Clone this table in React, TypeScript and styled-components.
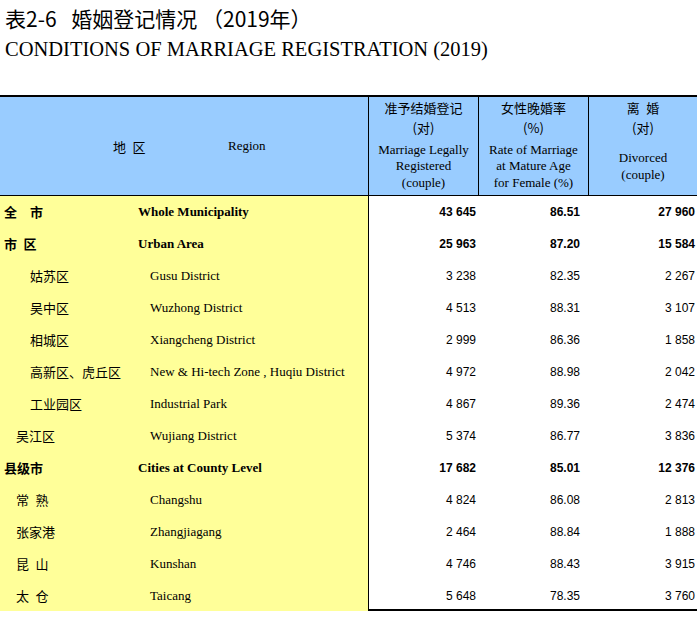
import React from 'react';
import styled, { createGlobalStyle, css } from 'styled-components';

const Global = createGlobalStyle`
  html, body { margin: 0; padding: 0; background: #fff; }
  body { font-family: "Liberation Serif", "Noto Sans CJK SC", serif; color: #000; }
  * { box-sizing: border-box; }
`;

const Page = styled.div`
  width: 699px;
  padding-top: 4px;
`;

const TitleCn = styled.h1`
  margin: 0 0 0 5px;
  font-family: "Noto Sans CJK SC", sans-serif;
  font-weight: 400;
  font-size: 21px;
  line-height: 28px;
  white-space: pre;
`;

const TitleEn = styled.h2`
  margin: 5px 0 0 5px;
  font-family: "Liberation Serif", serif;
  font-weight: 400;
  font-size: 20.5px;
  line-height: 24px;
`;

const grid = css`
  display: grid;
  grid-template-columns: 368px 110px 110px 109px;
`;

const Table = styled.div`
  margin-top: 34px;
  width: 697px;
  border-top: 2px solid #000;
  border-bottom: 2px solid #000;
`;

const HeadRow = styled.div`
  ${grid}
  height: 99px;
  background: #99ccff;
  border-bottom: 1px solid #000;
`;

const RegionHead = styled.div`
  display: flex;
  align-items: center;
  padding-left: 113px;
  font-size: 13px;
`;

const RegionHeadCn = styled.span`
  width: 115px;
  font-family: "Noto Sans CJK SC", sans-serif;
`;

const ColHead = styled.div`
  display: flex;
  flex-direction: column;
  border-left: 1px solid #000;
  text-align: center;
`;

const ColHeadCn = styled.div`
  height: 41px;
  padding-top: 1px;
  font-family: "Noto Sans CJK SC", sans-serif;
  font-size: 13px;
  line-height: 20px;
`;

const ColHeadEn = styled.div`
  flex: 1;
  display: flex;
  flex-direction: column;
  justify-content: center;
  font-family: "Liberation Serif", serif;
  font-size: 13px;
  line-height: 16.5px;
`;

const Row = styled.div<{ $last?: boolean }>`
  ${grid}
  height: ${(p) => (p.$last ? 29 : 32)}px;
  line-height: 32px;
`;

const RegionCell = styled.div<{ $level: number }>`
  display: grid;
  grid-template-columns: ${(p) => (p.$level === 0 ? 138 : 150)}px 1fr;
  background: #ffff99;
  font-size: 13px;
  font-weight: ${(p) => (p.$level === 0 ? 700 : 400)};
  white-space: nowrap;
`;

const CnName = styled.span<{ $level: number }>`
  padding-left: ${(p) => (p.$level === 0 ? 4 : p.$level === 1 ? 30 : 16)}px;
  font-family: "Noto Sans CJK SC", sans-serif;
`;

const EnName = styled.span`
  font-family: "Liberation Serif", serif;
`;

const NumCell = styled.div<{ $bold: boolean; $pad: number; $divider?: boolean }>`
  text-align: right;
  padding-right: ${(p) => p.$pad}px;
  font-family: "Liberation Sans", Arial, sans-serif;
  font-size: 12px;
  font-weight: ${(p) => (p.$bold ? 700 : 400)};
  border-left: ${(p) => (p.$divider ? '1px solid #000' : '0')};
  white-space: nowrap;
`;

type RowData = { cn: string; en: string; a: string; b: string; c: string; level: number };

const rows: RowData[] = [
  { cn: '全\u3000市', en: 'Whole Municipality', a: '43 645', b: '86.51', c: '27 960', level: 0 },
  { cn: '市\u2002区', en: 'Urban Area', a: '25 963', b: '87.20', c: '15 584', level: 0 },
  { cn: '姑苏区', en: 'Gusu District', a: '3 238', b: '82.35', c: '2 267', level: 1 },
  { cn: '吴中区', en: 'Wuzhong District', a: '4 513', b: '88.31', c: '3 107', level: 1 },
  { cn: '相城区', en: 'Xiangcheng District', a: '2 999', b: '86.36', c: '1 858', level: 1 },
  { cn: '高新区、虎丘区', en: 'New & Hi-tech Zone , Huqiu District', a: '4 972', b: '88.98', c: '2 042', level: 1 },
  { cn: '工业园区', en: 'Industrial Park', a: '4 867', b: '89.36', c: '2 474', level: 1 },
  { cn: '吴江区', en: 'Wujiang District', a: '5 374', b: '86.77', c: '3 836', level: 2 },
  { cn: '县级市', en: 'Cities at County Level', a: '17 682', b: '85.01', c: '12 376', level: 0 },
  { cn: '常\u2002熟', en: 'Changshu', a: '4 824', b: '86.08', c: '2 813', level: 2 },
  { cn: '张家港', en: 'Zhangjiagang', a: '2 464', b: '88.84', c: '1 888', level: 2 },
  { cn: '昆\u2002山', en: 'Kunshan', a: '4 746', b: '88.43', c: '3 915', level: 2 },
  { cn: '太\u2002仓', en: 'Taicang', a: '5 648', b: '78.35', c: '3 760', level: 2 },
];

const heads = [
  { cn: ['准予结婚登记', '(对)'], en: ['Marriage Legally', 'Registered', '(couple)'] },
  { cn: ['女性晚婚率', '(%)'], en: ['Rate of Marriage', 'at Mature Age', 'for Female (%)'] },
  { cn: ['离\u2002婚', '(对)'], en: ['Divorced', '(couple)'] },
];

export default function App() {
  return (
    <Page>
      <Global />
      <TitleCn>{'表2-6\u2002\u2009婚姻登记情况 （2019年）'}</TitleCn>
      <TitleEn>CONDITIONS OF MARRIAGE REGISTRATION (2019)</TitleEn>
      <Table>
        <HeadRow>
          <RegionHead>
            <RegionHeadCn>地{'\u2002'}区</RegionHeadCn>
            <span>Region</span>
          </RegionHead>
          {heads.map((h, i) => (
            <ColHead key={i}>
              <ColHeadCn>
                {h.cn.map((t) => (
                  <div key={t}>{t}</div>
                ))}
              </ColHeadCn>
              <ColHeadEn>
                {h.en.map((t) => (
                  <div key={t}>{t}</div>
                ))}
              </ColHeadEn>
            </ColHead>
          ))}
        </HeadRow>
        {rows.map((r, i) => (
          <Row key={r.en} $last={i === rows.length - 1}>
            <RegionCell $level={r.level}>
              <CnName $level={r.level}>{r.cn}</CnName>
              <EnName>{r.en}</EnName>
            </RegionCell>
            <NumCell $bold={r.level === 0} $pad={2} $divider>
              {r.a}
            </NumCell>
            <NumCell $bold={r.level === 0} $pad={8}>
              {r.b}
            </NumCell>
            <NumCell $bold={r.level === 0} $pad={2}>
              {r.c}
            </NumCell>
          </Row>
        ))}
      </Table>
    </Page>
  );
}
